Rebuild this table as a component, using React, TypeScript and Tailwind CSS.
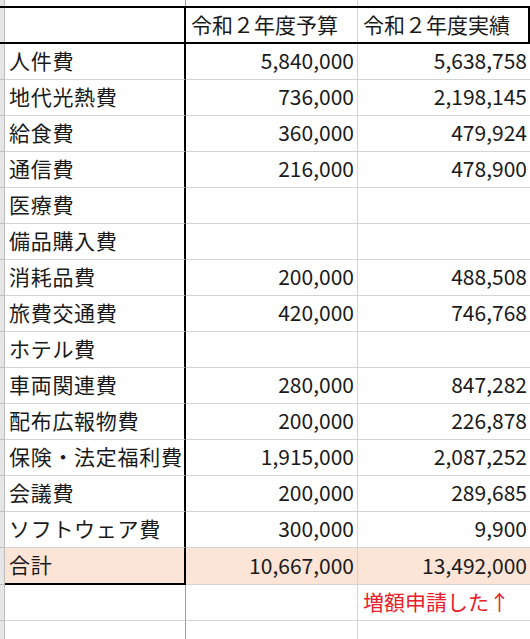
import React from "react";

type Row = { name: string; budget?: string; actual?: string };

const rows: Row[] = [
  { name: "人件費", budget: "5,840,000", actual: "5,638,758" },
  { name: "地代光熱費", budget: "736,000", actual: "2,198,145" },
  { name: "給食費", budget: "360,000", actual: "479,924" },
  { name: "通信費", budget: "216,000", actual: "478,900" },
  { name: "医療費" },
  { name: "備品購入費" },
  { name: "消耗品費", budget: "200,000", actual: "488,508" },
  { name: "旅費交通費", budget: "420,000", actual: "746,768" },
  { name: "ホテル費" },
  { name: "車両関連費", budget: "280,000", actual: "847,282" },
  { name: "配布広報物費", budget: "200,000", actual: "226,878" },
  { name: "保険・法定福利費", budget: "1,915,000", actual: "2,087,252" },
  { name: "会議費", budget: "200,000", actual: "289,685" },
  { name: "ソフトウェア費", budget: "300,000", actual: "9,900" },
];

const grid = "grid grid-cols-[5px_181px_172px_172px]";
const strip = "bg-[#e6e6e6] border-r border-b border-[#bdbdbd]";

const App = () => {
  return (
    <div
      className="w-[530px] h-[639px] overflow-hidden bg-white text-[21px] text-[#1a1a1a] leading-none"
      style={{ fontFamily: '"Noto Sans CJK JP", "Noto Sans", sans-serif' }}
    >
      {/* top sliver */}
      <div className={`${grid} h-[6px]`}>
        <div className="bg-[#e6e6e6] border-r border-[#bdbdbd]" />
        <div className="border-r border-[#9e9e9e]" />
        <div className="border-r border-[#d4d4d4]" />
        <div />
      </div>

      {/* header */}
      <div className={`${grid} h-[38px] border-y-2 border-black`}>
        <div className="bg-[#e6e6e6] border-r border-[#bdbdbd]" />
        <div className="border-r-2 border-black" />
        <div className="flex items-center pl-[5px] pb-[2px] border-r border-[#d4d4d4]">令和２年度予算</div>
        <div className="flex items-center pl-[5px] pb-[2px] border-r-2 border-black">令和２年度実績</div>
      </div>

      {rows.map((r) => (
        <div key={r.name} className={`${grid} h-[36px]`}>
          <div className={strip} />
          <div className="flex items-center pl-[4px] pb-[2px] tracking-[0.7px] border-r-2 border-b border-r-black border-b-[#d4d4d4]">
            {r.name}
          </div>
          <div className="flex items-center justify-end pr-[3px] pb-[2px] border-r border-b border-[#d4d4d4]">
            {r.budget}
          </div>
          <div className="flex items-center justify-end pr-[3px] pb-[2px] border-b border-[#d4d4d4]">
            {r.actual}
          </div>
        </div>
      ))}

      {/* total */}
      <div className={`${grid} h-[37px]`}>
        <div className={strip} />
        <div className="flex items-center pl-[4px] pb-[3px] tracking-[0.7px] bg-[#fce4d6] border-r-2 border-b-2 border-black">
          合計
        </div>
        <div className="flex items-center justify-end pr-[3px] pb-[2px] bg-[#fce4d6] border-r border-b border-[#d4d4d4]">
          10,667,000
        </div>
        <div className="flex items-center justify-end pr-[3px] pb-[2px] bg-[#fce4d6] border-b border-[#d4d4d4]">
          13,492,000
        </div>
      </div>

      <div className={`${grid} h-[36px]`}>
        <div className={strip} />
        <div className="border-r border-b border-r-[#9e9e9e] border-b-[#d4d4d4]" />
        <div className="border-r border-b border-[#d4d4d4]" />
        <div className="flex items-center pl-[5px] pb-[2px] border-b border-[#d4d4d4] text-[#e8202a]">
          増額申請した↑
        </div>
      </div>

      <div className={`${grid} h-[36px]`}>
        <div className={strip} />
        <div className="border-r border-b border-r-[#9e9e9e] border-b-[#d4d4d4]" />
        <div className="border-r border-b border-[#d4d4d4]" />
        <div className="border-b border-[#d4d4d4]" />
      </div>
    </div>
  );
};

export default App;
